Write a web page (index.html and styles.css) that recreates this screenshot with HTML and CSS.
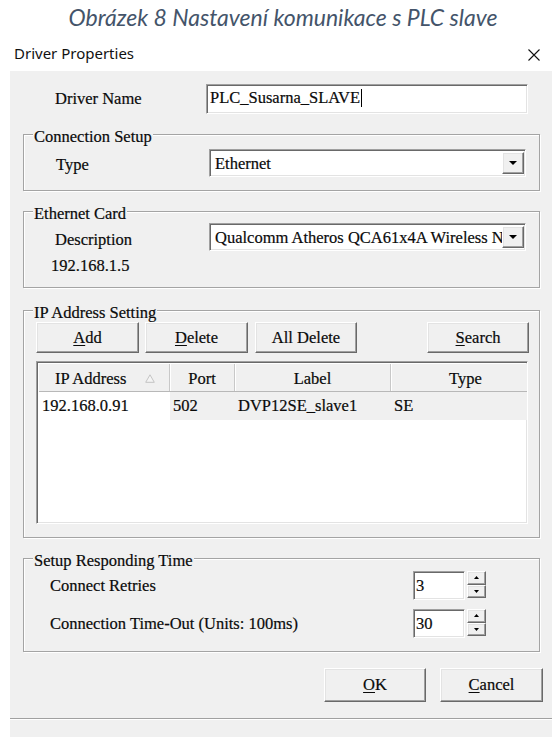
FILE: index.html
```html
<!DOCTYPE html>
<html lang="cs">
<head>
<meta charset="utf-8">
<title>Driver Properties</title>
<link rel="stylesheet" href="styles.css">
</head>
<body>
<p class="caption">Obrázek 8 Nastavení komunikace s PLC slave</p>
<div class="window">
  <div class="titlebar">
    <span class="title">Driver Properties</span>
    <svg class="close" width="12" height="12" viewBox="0 0 12 12" aria-label="Close">
      <path d="M0.5 0.5L11.5 11.5M11.5 0.5L0.5 11.5" stroke="#111" stroke-width="1.1" fill="none"/>
    </svg>
  </div>

  <div class="client">
    <div class="name-row">
      <span class="name-lbl">Driver Name</span>
      <div class="edit name-edit">PLC_Susarna_SLAVE<span class="caret"></span></div>
    </div>

    <div class="group g-conn">
      <div class="legend">Connection Setup</div>
      <div class="field-row">
        <span class="field-lbl type-lbl">Type</span>
        <div class="combo">
          <span class="combo-text">Ethernet</span>
          <span class="drop"><svg width="8" height="4" viewBox="0 0 8 4"><path d="M0 0H8L4 4Z" fill="#000"/></svg></span>
        </div>
      </div>
    </div>

    <div class="group g-card">
      <div class="legend">Ethernet Card</div>
      <div class="field-row card-row">
        <span class="field-lbl desc-lbl">Description</span>
        <div class="combo">
          <span class="combo-text">Qualcomm Atheros QCA61x4A Wireless Network Adapter</span>
          <span class="drop"><svg width="8" height="4" viewBox="0 0 8 4"><path d="M0 0H8L4 4Z" fill="#000"/></svg></span>
        </div>
      </div>
      <div class="ip-line">192.168.1.5</div>
    </div>

    <div class="group g-ip">
      <div class="legend">IP Address Setting</div>
      <div class="btn-row">
        <button class="btn btn-add"><u>A</u>dd</button>
        <button class="btn btn-del"><u>D</u>elete</button>
        <button class="btn btn-all">All Delete</button>
        <button class="btn btn-search"><u>S</u>earch</button>
      </div>
      <div class="list">
        <div class="list-head">
          <div class="hcell c-ip first-h">IP Address
            <svg class="sort" width="10" height="9" viewBox="0 0 10 9"><path d="M5 0.8L9.3 8.3H0.7Z" fill="#f4f4f4" stroke="#c4c4c4" stroke-width="1"/></svg>
          </div>
          <div class="hcell c-port">Port</div>
          <div class="hcell c-label">Label</div>
          <div class="hcell c-type">Type</div>
        </div>
        <div class="list-row">
          <div class="cell c-ip first-c">192.168.0.91</div>
          <div class="cell c-port">502</div>
          <div class="cell c-label">DVP12SE_slave1</div>
          <div class="cell c-type">SE</div>
        </div>
      </div>
    </div>

    <div class="group g-time">
      <div class="legend">Setup Responding Time</div>
      <div class="spin-row first-spin">
        <span class="spin-lbl">Connect Retries</span>
        <div class="edit spin-edit">3</div>
        <div class="spin">
          <span class="spin-btn"><svg width="5" height="3" viewBox="0 0 5 3"><path d="M2.5 0L5 3H0Z" fill="#000"/></svg></span>
          <span class="spin-btn"><svg width="5" height="3" viewBox="0 0 5 3"><path d="M0 0H5L2.5 3Z" fill="#000"/></svg></span>
        </div>
      </div>
      <div class="spin-row">
        <span class="spin-lbl">Connection Time-Out (Units: 100ms)</span>
        <div class="edit spin-edit">30</div>
        <div class="spin">
          <span class="spin-btn"><svg width="5" height="3" viewBox="0 0 5 3"><path d="M2.5 0L5 3H0Z" fill="#000"/></svg></span>
          <span class="spin-btn"><svg width="5" height="3" viewBox="0 0 5 3"><path d="M0 0H5L2.5 3Z" fill="#000"/></svg></span>
        </div>
      </div>
    </div>

    <div class="footer-buttons">
      <button class="btn btn-ok"><u>O</u>K</button>
      <button class="btn btn-cancel"><u>C</u>ancel</button>
    </div>

    <div class="statusbar"></div>
  </div>
</div>
</body>
</html>
```

FILE: styles.css
```css
* {
  box-sizing: border-box;
}

html,
body {
  margin: 0;
  padding: 0;
  background: #fff;
}

body {
  width: 552px;
  height: 737px;
  overflow: hidden;
  font-family: "Liberation Serif", "Times New Roman", serif;
  font-size: 16.5px;
  color: #0a0a0a;
}

/* figure caption above the dialog */
.caption {
  margin: 0;
  height: 34px;
  padding: 5px 0 0 14px;
  line-height: 24px;
  text-align: center;
  font-family: Lato, "Open Sans", sans-serif;
  font-style: italic;
  font-size: 23px;
  color: #44546a;
  white-space: nowrap;
}

/* dialog window */
.window {
  margin-left: 10px;
  width: 542px;
}

.titlebar {
  height: 37px;
  display: flex;
  align-items: flex-start;
  justify-content: space-between;
  padding: 0 12px 0 4px;
}

.title {
  margin-top: 9px;
  line-height: 20px;
  font-family: "Noto Sans", "Open Sans", sans-serif;
  font-size: 15px;
  color: #111;
}

.close {
  margin-top: 15px;
}

.client {
  height: 666px;
  background: #f0f0f0;
  padding-top: 13px;
  font-family: "Liberation Serif", "Times New Roman", serif;
  -webkit-text-stroke: 0.2px #0a0a0a;
}

/* 3D borders */
.edit,
.combo,
.list {
  background: #fff;
  border: 1px solid;
  border-color: #a0a0a0 #fff #fff #a0a0a0;
  box-shadow: inset 1px 1px 0 #696969, inset -1px -1px 0 #e3e3e3;
}

.btn,
.drop,
.spin-btn {
  background: #f0f0f0;
  border: 1px solid;
  border-color: #fff #696969 #696969 #fff;
  box-shadow: inset -1px -1px 0 #a0a0a0, inset 1px 1px 0 #e3e3e3;
}

/* driver name */
.name-row {
  display: flex;
  align-items: center;
  height: 30px;
  padding-left: 45px;
}

.name-lbl {
  width: 151px;
  line-height: 30px;
}

.name-edit {
  width: 322px;
  height: 30px;
  padding: 0 0 0 3px;
  line-height: 26px;
  white-space: nowrap;
}

.caret {
  display: inline-block;
  width: 1px;
  height: 18px;
  margin-left: 1px;
  background: #000;
  vertical-align: -4px;
}

/* group boxes */
.group {
  width: 517px;
  margin: 20px 0 0 13px;
  border: 1px solid #a4a4a4;
  box-shadow: inset 1px 1px 0 #fff, 1px 1px 0 #fff;
}

.legend {
  width: fit-content;
  margin: -6px 0 0 9px;
  padding: 0 1px;
  line-height: 16px;
  background: #f0f0f0;
}

.g-conn {
  padding-bottom: 13px;
}

.g-card {
  padding-bottom: 11px;
}

.g-ip {
  margin-top: 22px;
  padding-bottom: 13px;
}

.g-time {
  padding-bottom: 13px;
}

.field-row {
  display: flex;
  align-items: center;
  margin-top: 4px;
}

.card-row {
  margin-top: 1px;
}

.field-lbl {
  line-height: 20px;
  padding-top: 3px;
}

.type-lbl {
  width: 185px;
  padding-left: 32px;
}

.desc-lbl {
  width: 185px;
  padding-left: 31px;
  padding-top: 5px;
}

.combo {
  display: flex;
  width: 317px;
  height: 28px;
  padding: 2px 1px 2px 2px;
}

.combo-text {
  flex: 1;
  overflow: hidden;
  white-space: nowrap;
  padding-left: 3px;
  line-height: 24px;
}

.drop {
  width: 22px;
  flex: none;
  display: flex;
  align-items: center;
  justify-content: center;
}

.ip-line {
  margin-top: 5px;
  padding-left: 27px;
  line-height: 20px;
}

/* buttons */
.btn {
  height: 31px;
  padding: 0;
  font-family: "Liberation Serif", "Times New Roman", serif;
  font-size: 16.5px;
  color: #0a0a0a;
  -webkit-text-stroke: 0.2px #0a0a0a;
  text-align: center;
}

.btn u {
  text-decoration-thickness: 1px;
  text-underline-offset: 2px;
}

.btn-row {
  display: flex;
  margin: 1px 0 0 12px;
}

.btn-add {
  width: 103px;
}

.btn-del {
  width: 103px;
  margin-left: 6px;
}

.btn-all {
  width: 102px;
  margin-left: 7px;
}

.btn-search {
  width: 102px;
  margin-left: 70px;
}

/* address list */
.list {
  width: 492px;
  height: 163px;
  margin: 8px 0 0 12px;
  padding: 2px;
  overflow: hidden;
}

.list-head,
.list-row {
  display: flex;
  width: 501px;
}

.list-head {
  height: 28px;
  background: #f0f0f0;
  border-bottom: 1px solid #b8b8b8;
}

.hcell {
  display: flex;
  align-items: center;
  justify-content: center;
  line-height: 20px;
  padding-top: 3px;
  border-right: 1px solid #c8c8c8;
  box-shadow: 1px 0 0 #fff;
}

.first-h {
  justify-content: flex-start;
  padding-left: 16px;
}

.sort {
  margin-left: 19px;
  margin-top: -2px;
}

.c-ip {
  width: 131px;
}

.c-port {
  width: 65px;
}

.c-label {
  width: 156px;
}

.c-type {
  width: 149px;
  border-right: none;
}

.list-row {
  height: 28px;
}

.cell {
  padding: 4px 0 0 3px;
  line-height: 20px;
  white-space: nowrap;
  background: #f0f0f0;
}

.first-c {
  background: #fff;
}

/* responding time */
.spin-row {
  display: flex;
  align-items: flex-start;
  margin-top: 9px;
}

.first-spin {
  margin-top: 2px;
}

.spin-lbl {
  width: 389px;
  padding: 5px 0 0 26px;
  line-height: 20px;
}

.spin-edit {
  width: 52px;
  height: 29px;
  padding-left: 2px;
  line-height: 27px;
}

.spin {
  display: flex;
  flex-direction: column;
  width: 19px;
  height: 27px;
  margin-left: 2px;
}

.spin-btn {
  flex: 1;
  display: flex;
  align-items: center;
  justify-content: center;
}

/* OK / Cancel */
.footer-buttons {
  display: flex;
  justify-content: flex-end;
  margin: 16px 9px 0 0;
}

.btn-ok,
.btn-cancel {
  height: 34px;
}

.btn-ok {
  width: 102px;
}

.btn-cancel {
  width: 103px;
  margin-left: 14px;
}

.statusbar {
  margin-top: 16px;
  height: 19px;
  border-top: 1px solid #a0a0a0;
  box-shadow: inset 0 1px 0 #fff;
}
```
